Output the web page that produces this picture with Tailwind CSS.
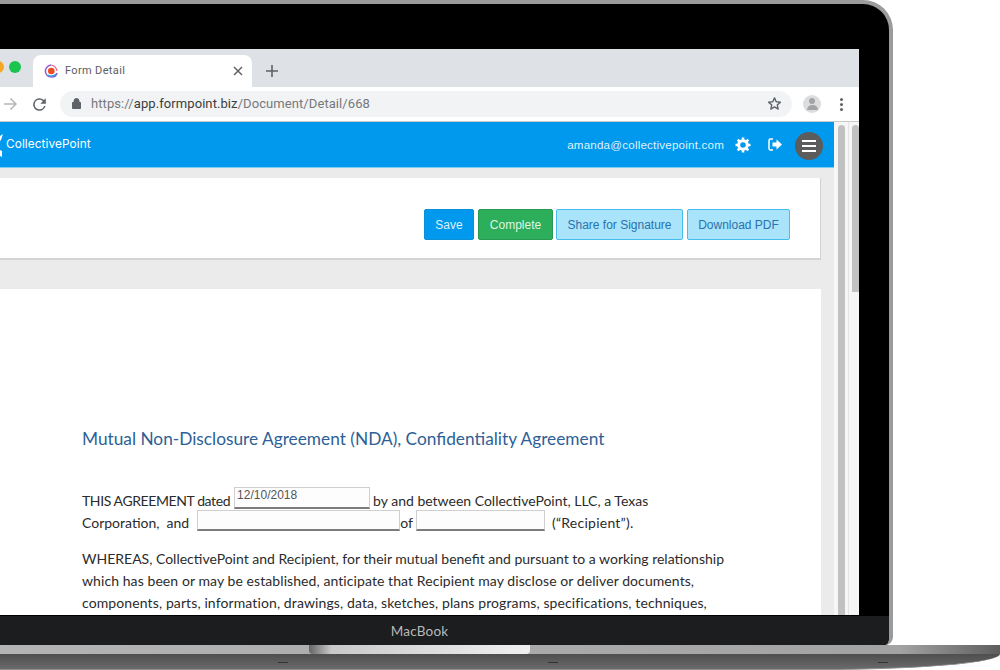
<!DOCTYPE html>
<html>
<head>
<meta charset="utf-8">
<script src="https://cdn.jsdelivr.net/npm/@tailwindcss/browser@4"></script>
</head>
<body class="bg-white">
<div class="w-[1000px] h-[670px] overflow-hidden bg-white flex flex-col font-['Liberation_Sans',sans-serif]">
  <!-- Lid -->
  <div class="w-[893px] h-[645px] shrink-0 border-t-4 border-r-4 border-[#9b9b9b] rounded-tr-[30px] rounded-br-[8px] bg-black pt-[45px] flex flex-col overflow-hidden">
    <div class="w-[859px] h-[566px] shrink-0 flex flex-col bg-white overflow-hidden">
      <!-- Tab strip -->
      <div class="h-[38px] shrink-0 bg-[#dee1e6] flex items-end">
        <div class="w-[33px] h-[38px] flex items-center justify-end pr-[12px] pb-[2px] gap-[5px]">
          <span class="w-[12px] h-[12px] rounded-full bg-[#f5a623] shrink-0 -ml-[10px]"></span>
          <span class="w-[12px] h-[12px] rounded-full bg-[#19c54f] shrink-0"></span>
        </div>
        <div class="w-[219px] h-[32px] bg-white rounded-t-[8px] flex items-center pl-[11px] pr-[9px]">
          <svg width="14" height="14" viewBox="0 0 14 14" class="shrink-0">
            <path d="M7 1 C3 1.500 1 5 1.500 8 C2 11 4.500 13 7.500 13 C10 13 12.500 11.500 13 9" fill="none" stroke="#8e5bd0" stroke-width="1.500"/>
            <path d="M7 1 C10 1.500 12.500 4 13 7" fill="none" stroke="#e8618c" stroke-width="1.200"/>
            <path d="M4 11 C6 12.500 9.500 12.500 12 10" fill="none" stroke="#2fa5e0" stroke-width="1.500"/>
            <circle cx="7.300" cy="7" r="3.300" fill="#ef4b23"/>
          </svg>
          <span class="ml-[7px] text-[11px] tracking-[0.35px] text-[#5a5d61] font-['Roboto',sans-serif]">Form Detail</span>
          <svg width="10" height="10" viewBox="0 0 10 10" class="ml-auto"><path d="M1 1 L9 9 M9 1 L1 9" stroke="#5f6368" stroke-width="1.500"/></svg>
        </div>
        <div class="w-[40px] h-[32px] flex items-center justify-center">
          <svg width="12" height="12" viewBox="0 0 12 12"><path d="M6 0 V12 M0 6 H12" stroke="#5f6368" stroke-width="1.600"/></svg>
        </div>
      </div>
      <!-- Toolbar -->
      <div class="h-[35px] shrink-0 bg-white border-b border-[#c9c9c9] flex items-center">
        <div class="w-[60px] flex items-center pl-[3px] gap-[13px] shrink-0">
          <svg width="14" height="14" viewBox="0 0 14 14"><path d="M1 7 H13 M7.500 1.500 L13 7 L7.500 12.500" fill="none" stroke="#b4b6b9" stroke-width="1.500"/></svg>
          <svg width="19" height="19" viewBox="0 0 24 24"><path d="M17.650 6.350A8 8 0 1 0 19.730 14h-2.080A6 6 0 1 1 12 6c1.660 0 3.140.69 4.220 1.780L13 11h7V4l-2.350 2.350z" fill="#5f6368"/></svg>
        </div>
        <div class="w-[732px] h-[26px] -mt-[1px] shrink-0 bg-[#f1f3f4] rounded-full flex items-center pl-[12px] pr-[10px]">
          <svg width="9" height="11" viewBox="0 0 9 11"><path d="M2 4.500 V3 a2.500 2.500 0 0 1 5 0 V4.500 M0.500 4.500 H8.500 V10.500 H0.500 Z" fill="#5f6368" stroke="#5f6368"/></svg>
          <span class="ml-[10px] text-[13px] tracking-[0.08px] text-[#77797c] font-['Roboto',sans-serif] whitespace-nowrap">https://<span class="text-[#3b3d40]">app.formpoint.biz</span>/Document/Detail/668</span>
          <svg width="15" height="15" viewBox="0 0 24 24" class="ml-auto"><path d="M12 3 L14.700 9.200 L21.500 9.800 L16.400 14.300 L17.900 21 L12 17.500 L6.100 21 L7.600 14.300 L2.500 9.800 L9.300 9.200 Z" fill="none" stroke="#5f6368" stroke-width="2.200" stroke-linejoin="round"/></svg>
        </div>
        <div class="ml-[11px] w-[18px] h-[18px] rounded-full bg-[#dcdddf] flex flex-col items-center justify-center overflow-hidden shrink-0 gap-[1px]">
          <span class="w-[6px] h-[6px] rounded-full bg-[#a2a4a6]"></span>
          <span class="w-[11px] h-[5px] rounded-t-full rounded-b-[3px] bg-[#a2a4a6]"></span>
        </div>
        <div class="ml-[19px] flex flex-col gap-[2px]">
          <span class="w-[3px] h-[3px] rounded-full bg-[#5f6368]"></span>
          <span class="w-[3px] h-[3px] rounded-full bg-[#5f6368]"></span>
          <span class="w-[3px] h-[3px] rounded-full bg-[#5f6368]"></span>
        </div>
      </div>
      <!-- Page -->
      <div class="flex-1 flex min-h-0">
        <div class="w-[834px] shrink-0 flex flex-col bg-[#ebebeb]">
          <!-- App header -->
          <div class="h-[46px] shrink-0 bg-[#0099ee] border-b border-[#7fcbf2] flex items-center">
            <svg width="6" height="30" viewBox="0 0 6 30" class="shrink-0"><path d="M0 6 L3 4 L1 10 L0 11 Z M0 20 L2 21 L2 27 L0 26 Z" fill="#ffffff"/></svg>
            <span class="text-[11.800px] font-['Inter',sans-serif] tracking-[0.1px] text-white whitespace-nowrap">CollectivePoint</span>
            <span class="ml-auto text-[11.600px] tracking-[0.2px] text-[#dff2fd] whitespace-nowrap">amanda@collectivepoint.com</span>
            <svg width="16" height="16" viewBox="0 0 16 16" class="ml-[11px] shrink-0"><circle cx="8" cy="8" r="4.300" fill="none" stroke="#fff" stroke-width="3"/><path d="M8 0.500 V15.500 M0.500 8 H15.500 M2.700 2.700 L13.300 13.300 M13.300 2.700 L2.700 13.300" stroke="#fff" stroke-width="2.600" stroke-dasharray="2.800 9.400"/></svg>
            <svg width="15" height="13" viewBox="0 0 15 13" class="ml-[17px] shrink-0"><path d="M5 1 H2.500 Q1 1 1 2.500 V10.500 Q1 12 2.500 12 H5" fill="none" stroke="#fff" stroke-width="1.500"/><path d="M4.500 4.500 H8.500 V1.500 L14 6.500 L8.500 11.500 V8.500 H4.500 Z" fill="#fff"/></svg>
            <div class="ml-[12px] mr-[11px] mt-[2px] w-[28px] h-[28px] rounded-full bg-[#5c5c5c] flex flex-col items-center justify-center gap-[3px] shrink-0">
              <span class="w-[14px] h-[2px] bg-white"></span>
              <span class="w-[14px] h-[2px] bg-white"></span>
              <span class="w-[14px] h-[2px] bg-white"></span>
            </div>
          </div>
          <!-- Actions card -->
          <div class="mt-[10px] h-[82px] w-[821px] shrink-0 bg-white border-r border-b-2 border-[#d4d4d4] flex items-start justify-end pt-[31px] pr-[30px] text-[12px]">
            <div class="h-[31px] w-[50px] flex items-center justify-center rounded-[2px] bg-[#0099ee] border border-[#0a8fd8] text-[#dff2fd]">Save</div>
            <div class="ml-[4px] h-[31px] w-[75px] flex items-center justify-center rounded-[2px] bg-[#2cae5b] border border-[#269a50] text-[#dff5e6]">Complete</div>
            <div class="ml-[3px] h-[31px] w-[127px] flex items-center justify-center rounded-[2px] bg-[#a9e4fb] border border-[#45bdf0] text-[#2a72ab]">Share for Signature</div>
            <div class="ml-[4px] h-[31px] w-[103px] flex items-center justify-center rounded-[2px] bg-[#a9e4fb] border border-[#45bdf0] text-[#2a72ab]">Download PDF</div>
          </div>
          <!-- Document -->
          <div class="mt-[29px] w-[821px] flex-1 min-h-0 bg-white pl-[82px] pt-[138px] overflow-hidden font-['Lato',sans-serif] text-[14px] leading-[22px] text-[#2b2b2b] whitespace-nowrap">
            <div class="h-[24px] text-[17.300px] leading-[24px] text-[#2e5f96]">Mutual Non-Disclosure Agreement (NDA), Confidentiality Agreement</div>
            <div class="mt-[39px] flex h-[22px] items-center">
              <span class="tracking-[-0.4px]">THIS AGREEMENT dated</span>
              <span class="ml-[4px] self-start -mt-[3px] w-[136px] h-[22px] shrink-0 bg-[#fdfdfd] border border-[#cfcfcf] border-b-2 border-b-[#7c7c7c] pl-[2px] text-[12px] leading-[15px] text-[#555] font-['Liberation_Sans',sans-serif]">12/10/2018</span>
              <span class="ml-[3px]">by and between CollectivePoint, LLC, a Texas</span>
            </div>
            <div class="flex h-[22px] items-center">
              <span>Corporation,&nbsp; and</span>
              <span class="ml-[8px] self-start -mt-[2px] w-[203px] h-[21px] shrink-0 bg-[#fdfdfd] border border-[#cfcfcf] border-b-2 border-b-[#7c7c7c]"></span>
              <span>of</span>
              <span class="ml-[3px] self-start -mt-[2px] w-[129px] h-[21px] shrink-0 bg-[#fdfdfd] border border-[#cfcfcf] border-b-2 border-b-[#7c7c7c]"></span>
              <span class="ml-[7px] tracking-[0.25px]">(“Recipient”).</span>
            </div>
            <div class="mt-[14px]">WHEREAS, CollectivePoint and Recipient, for their mutual benefit and pursuant to a working relationship</div>
            <div class="tracking-[0.08px]">which has been or may be established, anticipate that Recipient may disclose or deliver documents,</div>
            <div class="tracking-[0.11px]">components, parts, information, drawings, data, sketches, plans programs, specifications, techniques,</div>
          </div>
        </div>
        <!-- Scrollbars -->
        <div class="flex-1 bg-[#f6f6f6] flex pl-[4px]">
          <div class="w-[7px] h-full rounded-t-full bg-[#c1c1c1] mt-[3px]"></div>
          <div class="ml-[3px] w-px h-full bg-[#e4e4e4]"></div>
          <div class="ml-[3px] w-[7px] h-[167px] mt-[3px] rounded-t-full rounded-bl-[3px] bg-[#c1c1c1]"></div>
        </div>
      </div>
    </div>
    <!-- Bezel -->
    <div class="flex-1 bg-[#1c1d1f] border-t border-black rounded-br-[6px] flex items-center justify-center pr-[50px] pt-[2px]">
      <span class="text-[13.500px] tracking-[0.2px] text-[#b9b9b9] font-['Lato',sans-serif]">MacBook</span>
    </div>
  </div>
  <!-- Base -->
  <div class="w-[1000px] h-[25px] shrink-0 rounded-br-[180px_16px] overflow-hidden flex flex-col bg-gradient-to-b from-[#3f3f3f] to-[#6a6a6a] border-b border-[#8d8d8d]">
    <div class="h-[9px] shrink-0 flex bg-gradient-to-r from-[#b4b4b4] via-[#a3a3a3] via-90% to-[#5e5e5e]">
      <div class="ml-[309px] w-[221px] h-[9px] rounded-b-[4px] bg-gradient-to-r from-[#666] via-[#c9c9c9] via-10% to-[#f0f0f0]"></div>
    </div>
    <div class="flex mt-[8px]">
      <span class="ml-[278px] w-[10px] h-px bg-[#333333]"></span>
      <span class="ml-[260px] w-[10px] h-px bg-[#333333]"></span>
      <span class="ml-[320px] w-[10px] h-px bg-[#333333]"></span>
    </div>
  </div>
</div>
</body>
</html>
